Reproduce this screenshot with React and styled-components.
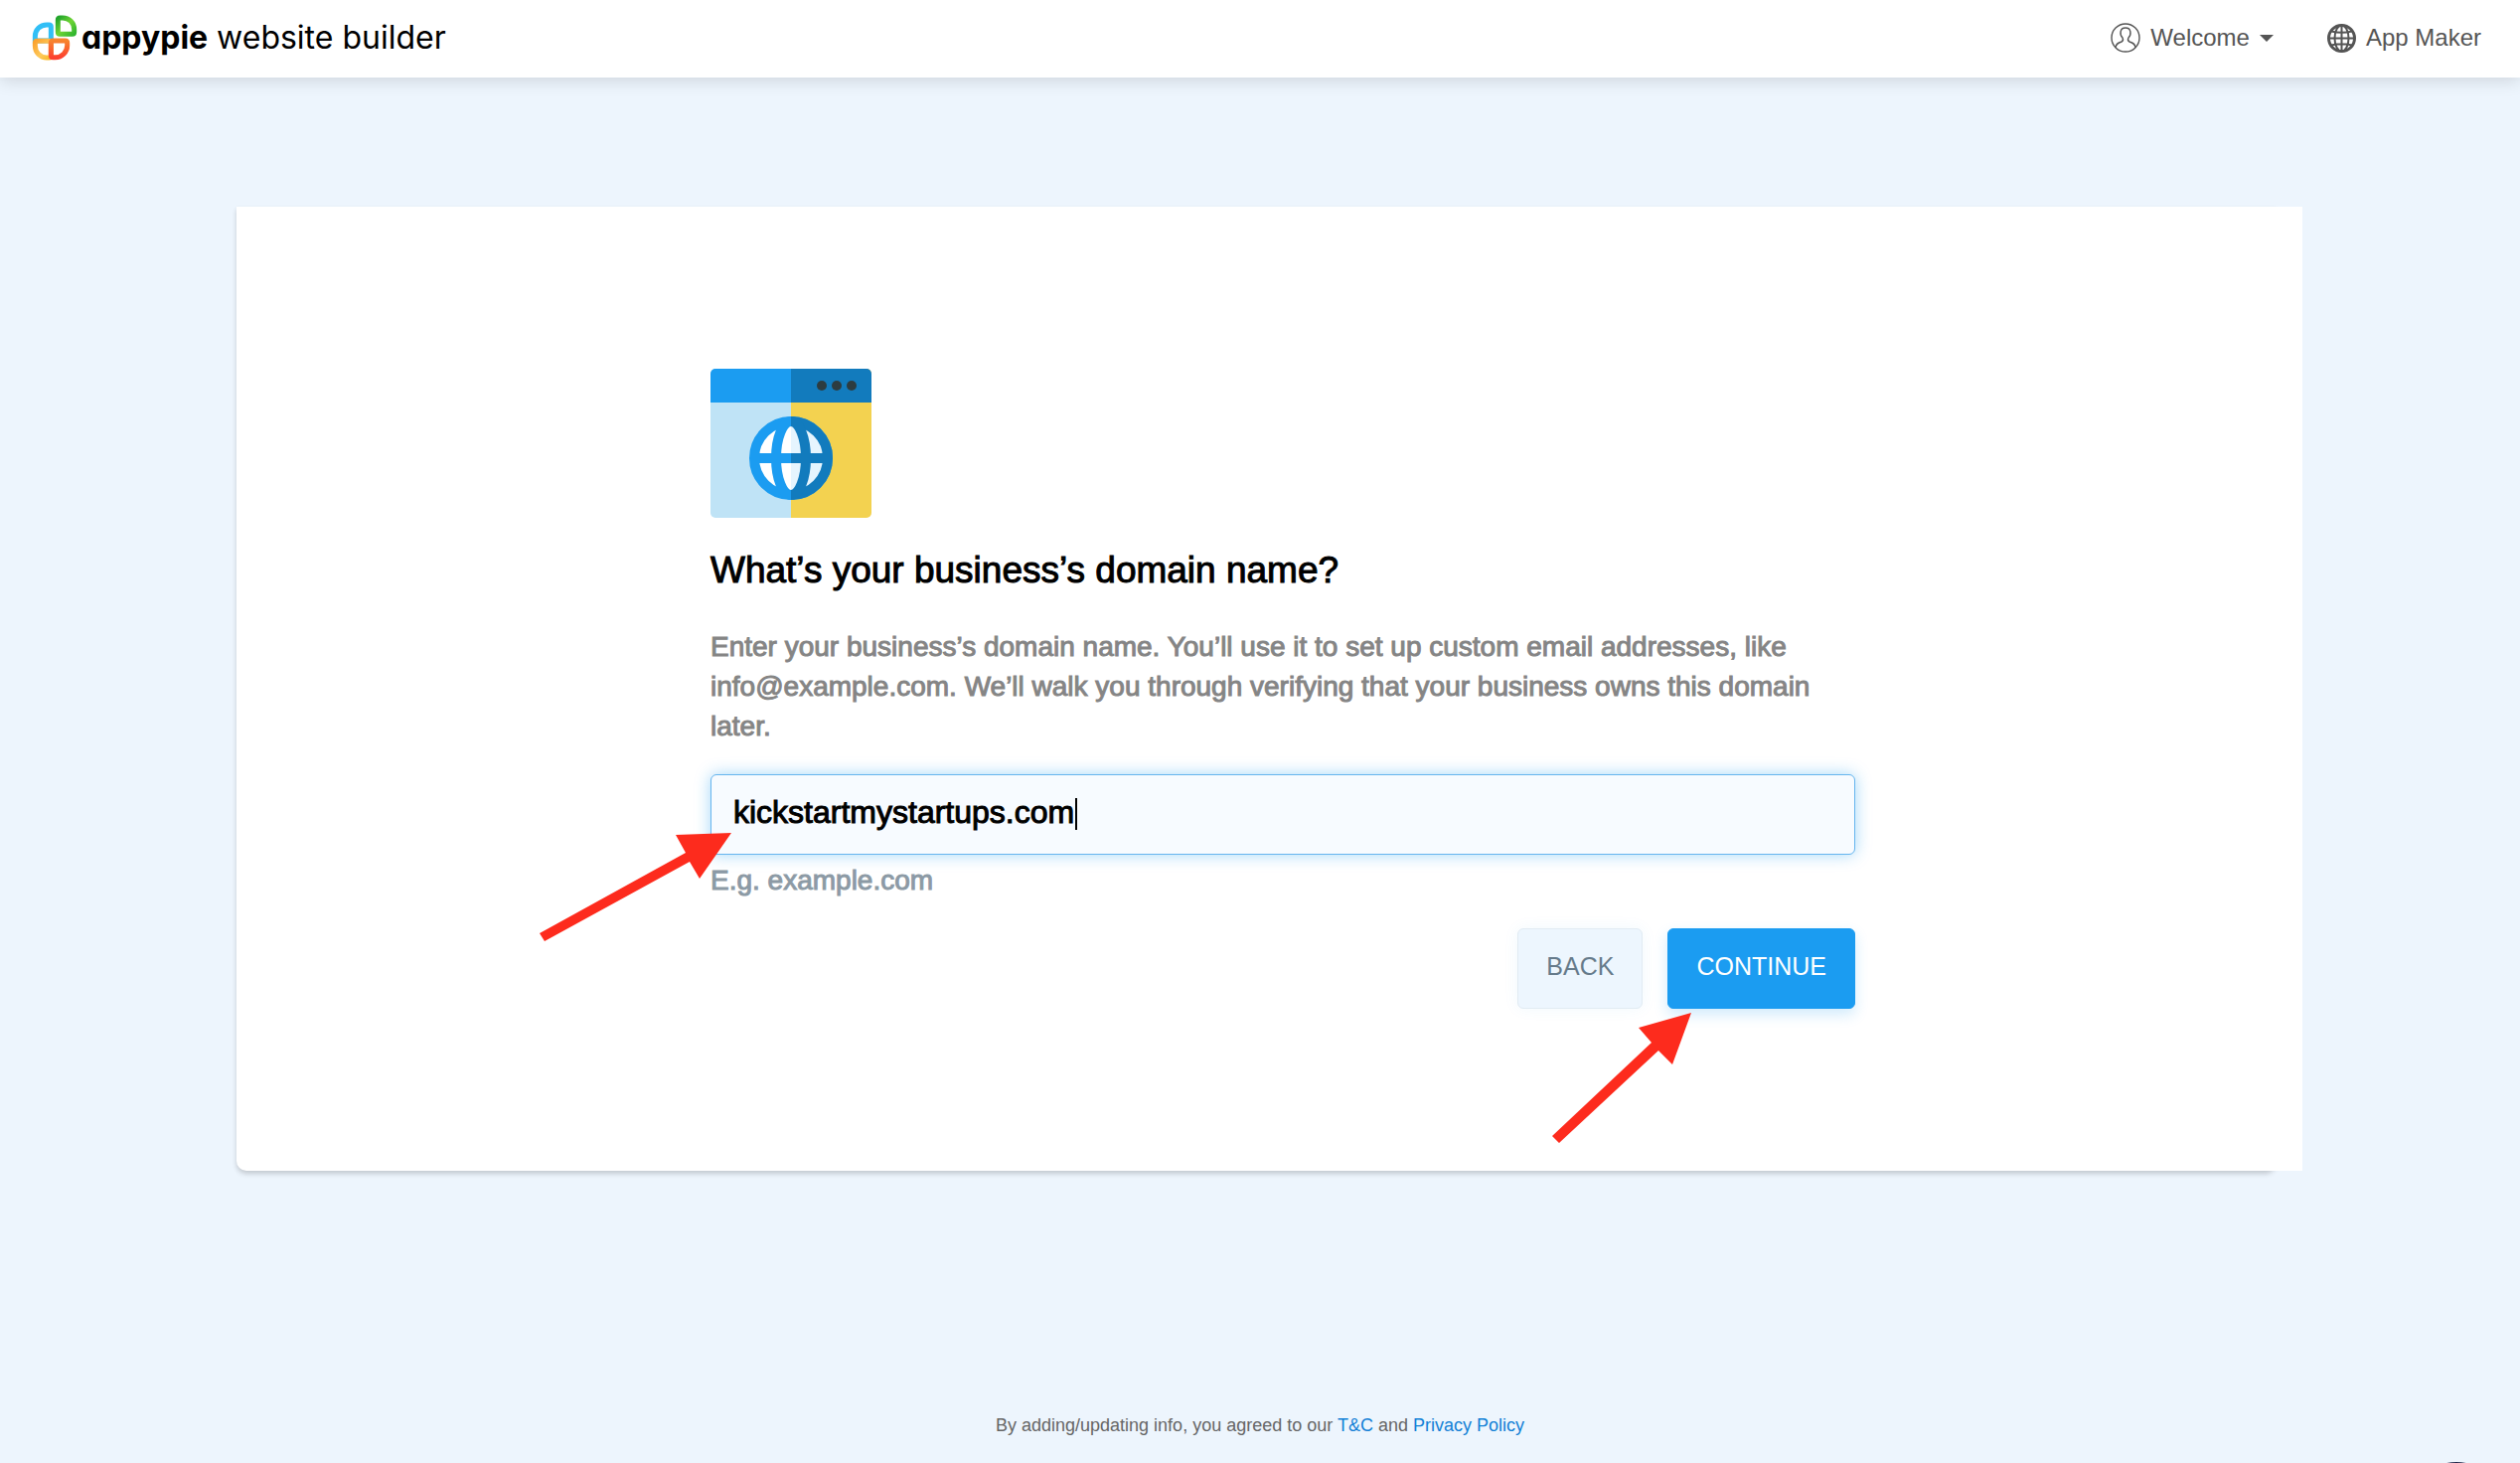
import React, {useState} from 'react';
import styled, {createGlobalStyle} from 'styled-components';

const BLUE = '#1b9cf1';
const ARROW_RED = '#fd2b1d';

const GlobalStyle = createGlobalStyle`
  *,
  *::before,
  *::after {
    box-sizing: border-box;
  }

  body {
    margin: 0;
    background: #edf5fd;
    color: #000;
    font-family: 'Liberation Sans', Arial, sans-serif;
  }
`;

const Page = styled.div`
  display: flex;
  flex-direction: column;
  min-height: 100vh;
`;

const Header = styled.header`
  display: flex;
  align-items: center;
  justify-content: space-between;
  height: 78px;
  padding: 0 39px 2px 32px;
  background: #fff;
  box-shadow: 0 4px 16px rgba(0, 0, 0, 0.12);
`;

const Brand = styled.a`
  display: flex;
  align-items: center;
  gap: 4px;
  color: #000;
  text-decoration: none;
`;

const BrandName = styled.span`
  font-family: Inter, sans-serif;
  font-size: 32px;
  font-weight: 400;
  line-height: 40px;
  font-feature-settings: 'cv11';

  b {
    font-weight: 700;
  }
`;

const Nav = styled.nav`
  display: flex;
  align-items: center;
  gap: 54px;
`;

const navItem = `
  display: flex;
  align-items: center;
  gap: 10px;
  padding: 0;
  border: 0;
  background: none;
  color: #555;
  font-family: inherit;
  font-size: 24px;
  line-height: 32px;
  text-decoration: none;
  cursor: pointer;
`;

const NavButton = styled.button`
  ${navItem}
`;

const NavLink = styled.a`
  ${navItem}
`;

const Main = styled.main`
  padding: 130px 238px 0;
`;

const Card = styled.section`
  margin-right: 8px;
  border-radius: 0 0 10px 10px;
  background: #fff;
  box-shadow: 0 3px 5px rgba(0, 0, 0, 0.18);
`;

// Wider than the card: the row runs past its right edge
const CardRow = styled.div`
  display: flex;
  justify-content: center;
  margin: 0 -27px 0 27px;
  padding: 163px 0;
  background: #fff;
`;

const DomainForm = styled.form`
  display: flex;
  flex-direction: column;
  width: 100%;
  max-width: 1152px;
`;

const Title = styled.h1`
  margin: 33px 0 37px;
  font-size: 37px;
  font-weight: 400;
  line-height: 40px;
  -webkit-text-stroke: 1px currentColor;
`;

const Description = styled.p`
  margin: 0 0 28px;
  color: #858585;
  font-size: 28px;
  line-height: 40px;
  -webkit-text-stroke: 1px currentColor;
`;

const Field = styled.div`
  position: relative;
`;

const DomainInput = styled.input`
  display: block;
  width: 100%;
  height: 81px;
  padding: 0 22px 4px;
  border: 1px solid #66b5ee;
  border-radius: 6px;
  outline: 0;
  background: #f7fbff;
  box-shadow: 0 0 16px rgba(27, 156, 241, 0.4);
  color: #000;
  font-family: inherit;
  font-size: 32px;
  -webkit-text-stroke: 1px currentColor;
`;

const TextCursor = styled.span`
  position: absolute;
  top: 24px;
  left: 367px;
  width: 2px;
  height: 32px;
  background: #000;
`;

const Hint = styled.p`
  margin: 6px 0 0;
  color: #8c9aa5;
  font-size: 28px;
  line-height: 40px;
  -webkit-text-stroke: 1px currentColor;
`;

const Actions = styled.div`
  display: flex;
  justify-content: flex-end;
  gap: 25px;
  margin-top: 28px;
`;

const ActionSlot = styled.div`
  position: relative;
`;

const Button = styled.button`
  height: 81px;
  padding: 0 28px 4px;
  border: 1px solid ${props => (props.$primary ? BLUE : '#e1ebf3')};
  border-radius: 6px;
  background: ${props => (props.$primary ? BLUE : '#edf6fe')};
  box-shadow: ${props =>
    props.$primary ? '0 6px 14px rgba(27, 156, 241, 0.2)' : '0 0 16px rgba(27, 156, 241, 0.06)'};
  color: ${props => (props.$primary ? '#fff' : '#667b8b')};
  font-family: inherit;
  font-size: 25px;
  cursor: pointer;
`;

const Arrow = styled.svg`
  position: absolute;
  top: ${props => props.$top}px;
  left: ${props => props.$left}px;
  fill: ${ARROW_RED};
  pointer-events: none;
`;

const Footer = styled.footer`
  margin-top: auto;
  padding-bottom: 26px;
  color: #666;
  font-size: 18px;
  line-height: 24px;
  text-align: center;

  a {
    color: #1280d6;
    text-decoration: none;
  }
`;

const ChatLauncher = styled.button`
  position: fixed;
  right: 14px;
  bottom: -99px;
  width: 100px;
  height: 100px;
  border: 0;
  border-radius: 50%;
  background: #20264a;
`;

const BrandLogo = () => (
  <svg width="46" height="46" viewBox="96 45 138 138" fill="none" strokeWidth="15" aria-hidden="true">
    <defs>
      <linearGradient id="leafGreen" x1="0" y1="0" x2="1" y2="1">
        <stop offset="0" stopColor="#22a52c" />
        <stop offset="0.5" stopColor="#6fd434" />
        <stop offset="1" stopColor="#31b52e" />
      </linearGradient>
      <linearGradient id="leafYellow" x1="0" y1="0" x2="1" y2="1">
        <stop offset="0" stopColor="#fba32f" />
        <stop offset="0.6" stopColor="#fdc95a" />
        <stop offset="1" stopColor="#f9b92c" />
      </linearGradient>
      <linearGradient id="leafRed" x1="0" y1="0" x2="0" y2="1">
        <stop offset="0" stopColor="#f7842f" />
        <stop offset="1" stopColor="#fc4130" />
      </linearGradient>
    </defs>
    <path
      d="M106 123V110C106 90 121 75 141 75H148Q154 75 154 81V117Q154 123 148 123Z"
      stroke="#31bff6"
    />
    <path
      d="M112 124H148Q154 124 154 130V168Q154 174 148 174H141C121 174 106 158 106 138V130Q106 124 112 124Z"
      stroke="url(#leafYellow)"
    />
    <path
      d="M160 123H197Q203 123 203 129V137C203 157 187 173 167 173H160Q154 173 154 167V129Q154 123 160 123Z"
      stroke="url(#leafRed)"
    />
    <path
      d="M181 54H189C209 54 224 69 224 89V97Q224 103 218 103H181Q175 103 175 97V60Q175 54 181 54Z"
      stroke="url(#leafGreen)"
    />
  </svg>
);

const UserIcon = () => (
  <svg width="30" height="30" viewBox="0 0 30 30" fill="none" stroke="#555" strokeWidth="1.4" aria-hidden="true">
    <circle cx="15" cy="15" r="14" />
    <path d="M5 25C5 21 8 20 11 19C13 18 13 17 12 15C9 12 9 5 15 5C21 5 21 12 18 15C17 17 17 18 19 19C22 20 25 21 25 25" />
  </svg>
);

const CaretIcon = () => (
  <svg width="14" height="7" viewBox="0 0 14 7" fill="#555" aria-hidden="true">
    <path d="M0 0H14L7 7Z" />
  </svg>
);

const GlobeIcon = () => (
  <svg width="29" height="29" viewBox="0 0 29 29" fill="none" stroke="#555" strokeWidth="2" aria-hidden="true">
    <circle cx="14.5" cy="14.5" r="13" strokeWidth="3" />
    <ellipse cx="14.5" cy="14.5" rx="7" ry="13" />
    <path d="M14.5 1V28M1 14.5H28M4 7.5Q14.5 10 25 7.5M4 21.5Q14.5 19 25 21.5" />
  </svg>
);

const DomainIcon = () => (
  <svg width="162" height="150" viewBox="0 0 162 150" aria-hidden="true">
    <defs>
      <clipPath id="windowShape">
        <rect width="162" height="150" rx="5" />
      </clipPath>
      <clipPath id="rightHalf">
        <rect x="81" width="81" height="150" />
      </clipPath>
    </defs>
    <g clipPath="url(#windowShape)">
      <rect width="81" height="150" fill="#bfe3f6" />
      <rect x="81" width="81" height="150" fill="#f3d250" />
      <rect width="81" height="34" fill={BLUE} />
      <rect x="81" width="81" height="34" fill="#127bbd" />
    </g>
    <g fill="#2d3c40">
      <circle cx="112" cy="17" r="5" />
      <circle cx="127" cy="17" r="5" />
      <circle cx="142" cy="17" r="5" />
    </g>
    <g fill="#fff" stroke={BLUE} strokeWidth="10">
      <circle cx="81" cy="90" r="37" />
      <ellipse cx="81" cy="90" rx="15" ry="37" />
      <path d="M44 90H118" />
    </g>
    <g clipPath="url(#rightHalf)" fill="#e6f5fe" stroke="#127bbd" strokeWidth="10">
      <circle cx="81" cy="90" r="37" />
      <ellipse cx="81" cy="90" rx="15" ry="37" />
      <path d="M44 90H118" />
    </g>
  </svg>
);

export default function App() {
  const [domain, setDomain] = useState('kickstartmystartups.com');

  return (
    <>
      <GlobalStyle />
      <Page>
        <Header>
          <Brand href="#">
            <BrandLogo />
            <BrandName>
              <b>appypie</b> website builder
            </BrandName>
          </Brand>
          <Nav>
            <NavButton type="button">
              <UserIcon />
              Welcome
              <CaretIcon />
            </NavButton>
            <NavLink href="#">
              <GlobeIcon />
              App Maker
            </NavLink>
          </Nav>
        </Header>

        <Main>
          <Card>
            <CardRow>
              <DomainForm onSubmit={e => e.preventDefault()}>
                <DomainIcon />
                <Title>What’s your business’s domain name?</Title>
                <Description id="domain-description">
                  Enter your business’s domain name. You’ll use it to set up custom email addresses,
                  like info@example.com. We’ll walk you through verifying that your business owns
                  this domain later.
                </Description>
                <Field>
                  <DomainInput
                    type="text"
                    aria-label="Domain name"
                    aria-describedby="domain-description domain-hint"
                    value={domain}
                    onChange={e => setDomain(e.target.value)}
                  />
                  <TextCursor />
                  <Arrow $top={59} $left={-172} width="193" height="110" aria-hidden="true">
                    <path d="M193 0L137 2L147 20L0 101L5 109L151 29L161 46Z" />
                  </Arrow>
                </Field>
                <Hint id="domain-hint">E.g. example.com</Hint>
                <Actions>
                  <Button type="button">BACK</Button>
                  <ActionSlot>
                    <Button type="submit" $primary>
                      CONTINUE
                    </Button>
                    <Arrow $top={85} $left={-116} width="140" height="132" aria-hidden="true">
                      <path d="M140 0L87 15L100 30L0 124L7 131L107 38L121 52Z" />
                    </Arrow>
                  </ActionSlot>
                </Actions>
              </DomainForm>
            </CardRow>
          </Card>
        </Main>

        <Footer>
          By adding/updating info, you agreed to our <a href="#">T&amp;C</a> and{' '}
          <a href="#">Privacy Policy</a>
        </Footer>
      </Page>
      <ChatLauncher type="button" aria-label="Chat" />
    </>
  );
}
